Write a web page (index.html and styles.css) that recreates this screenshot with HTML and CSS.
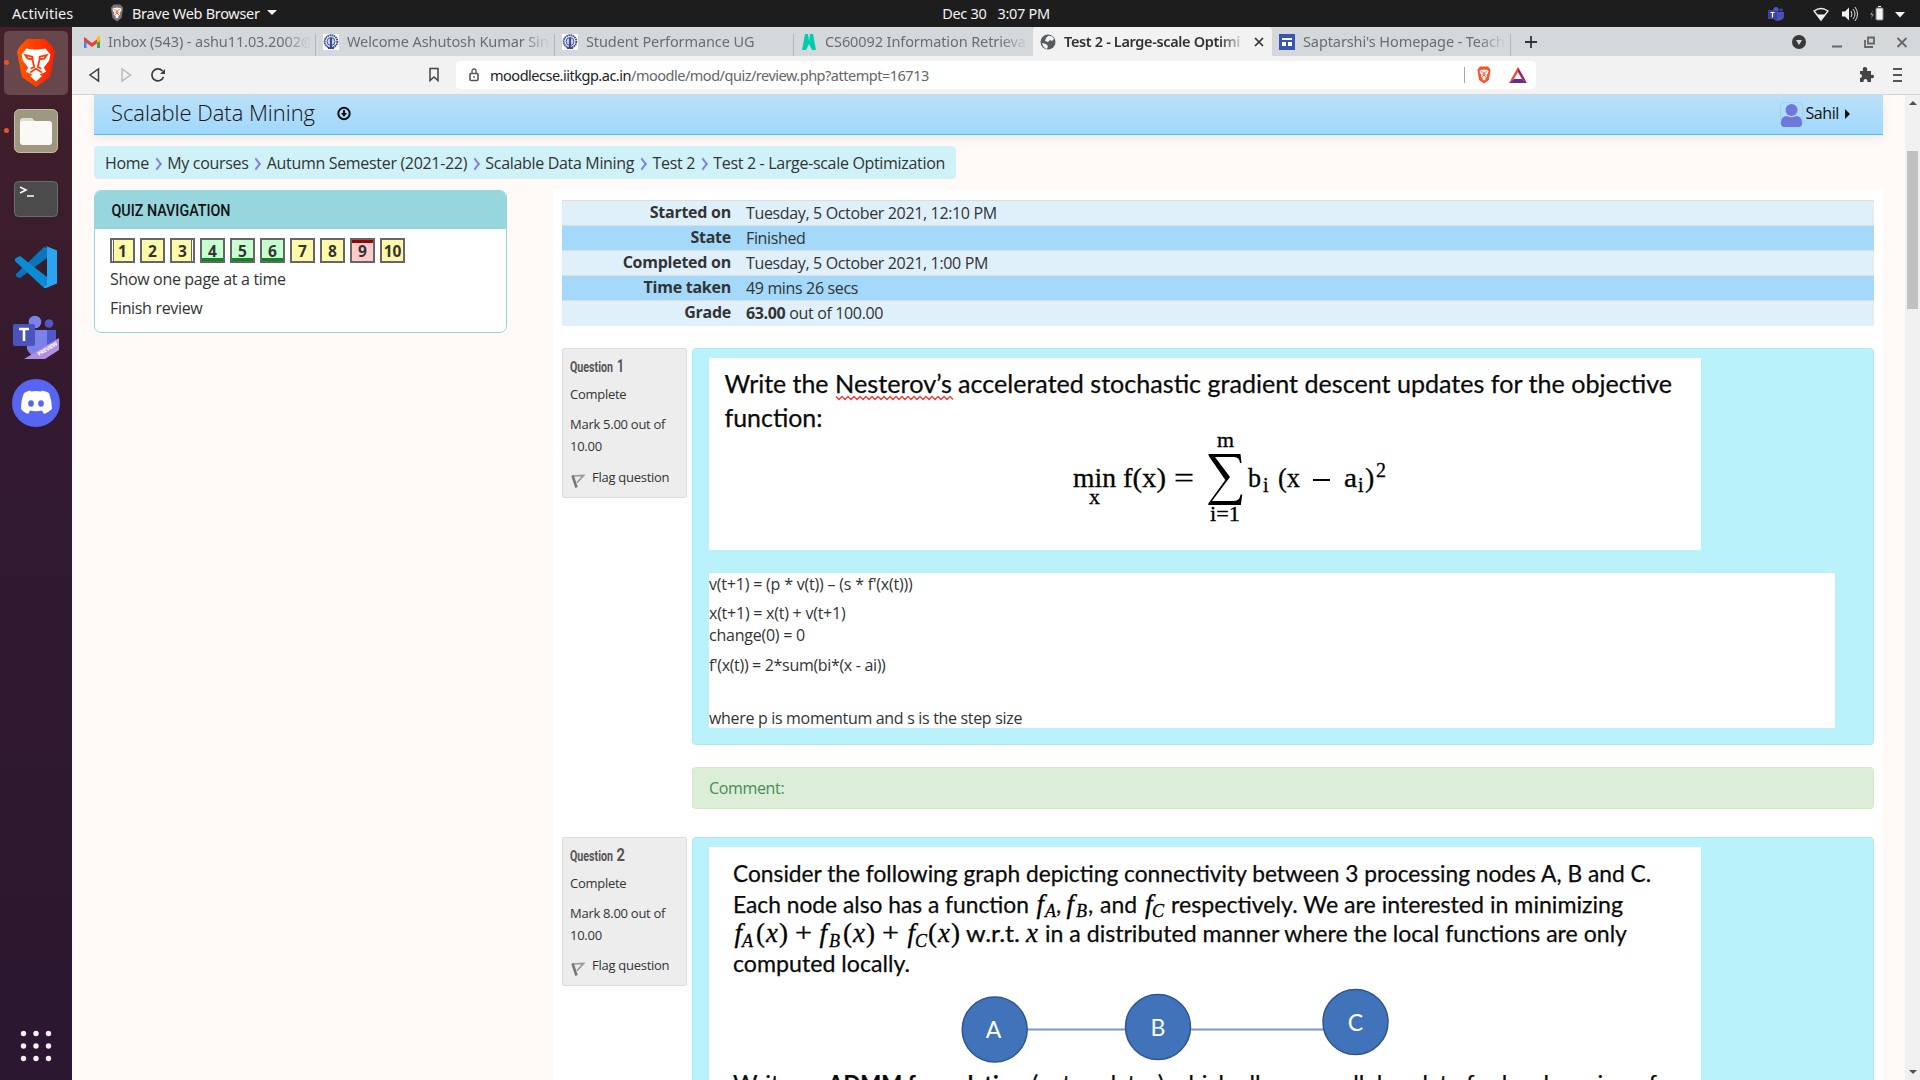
FILE: index.html
```html
<!DOCTYPE html>
<html lang="en">
<head>
<meta charset="utf-8">
<title>Test 2 - Large-scale Optimization</title>
<link rel="stylesheet" href="styles.css">
</head>
<body>
<svg class="defs" width="0" height="0">
  <defs>
    <linearGradient id="brave"><stop offset="0" stop-color="#ff5a00"/><stop offset="1" stop-color="#ff1f00"/></linearGradient>
    <g id="lion-face">
      <path d="M9 14l4-3 4 1 3-2 3 2 4-1 4 3-1 5-4 5 2 4-8 5-8-5 2-4-4-5z" fill="#fff"/>
      <path d="M12 16l5 1 2 1v6l-3-2M28 16l-5 1-2 1v6l3-2M14 29l6-4 6 4M20 24v2" stroke="#ff4210" stroke-width="1.8" fill="none"/>
      <path d="M20 29.500l-4.500 4 4.500 4 4.500-4z" fill="#fff"/>
    </g>
    <g id="lion-large">
      <path d="M8 17l4-5 5 1h6l5-1 4 5-1 5-4.500 6 2 3.500-8.500 3.500-8.500-3.500 2-3.500L9 22z" fill="#fff"/>
      <path d="M11 17.500l6 1.500v2l-4-.5zM29 17.500l-6 1.500v2l4-.5zM17 21l1.500 6.500-3 1.500M23 21l-1.500 6.500 3 1.500M15 32l5-3 5 3" stroke="#ff3c08" stroke-width="1.500" fill="none"/>
      <path d="M20 32l-5 3 5 4.500 5-4.500z" fill="#fff"/>
    </g>
    <g id="iit">
      <rect width="16" height="16" fill="#fff"/>
      <circle cx="8" cy="7.500" r="6.300" fill="none" stroke="#3c4c8f" stroke-width="1.900" stroke-dasharray="1.600 .5"/>
      <circle cx="8" cy="7.500" r="4" fill="#c9d0ea" stroke="#3c4c8f"/>
      <path d="M7 4h2v9h2v2H5v-2h2z" fill="#3c4c8f"/>
    </g>
    <g id="flag">
      <path d="M1.500 3l11-.5-6.500 7" fill="none" stroke="#999" stroke-width="1.700"/>
      <path d="M1.500 2.500l4 12" stroke="#777" stroke-width="2.600"/>
    </g>
  </defs>
</svg>
<div class="desktop">
  <header class="topbar">
    <span class="activities">Activities</span>
    <span class="app-menu">
      <svg width="16" height="18" viewBox="4 2 32 44"><path d="M12 3h16l7 8-4 25-11 9L9 36 5 11z" fill="#777"/><use href="#lion-face"/></svg>
      <span class="app-name">Brave Web Browser</span><i class="tri"></i>
    </span>
    <span class="clock"><span>Dec 30</span><span>3:07 PM</span></span>
    <svg class="tray" width="150" height="26" viewBox="1765 0 150 26">
      <circle cx="1776" cy="8.500" r="2.600" fill="#5059c9"/><circle cx="1781" cy="9" r="1.800" fill="#3940a0"/><path d="M1773 11h11v5q-1 3-3 3l-2 1q-4 0-6-3z" fill="#4a50b8"/><rect x="1768" y="9" width="9" height="9" fill="#3b42a8"/><path d="M1770.500 11.500h4M1772.500 11.500v5" stroke="#fff" stroke-width="1.200"/>
      <path d="M1814 10q7-5 14 0l-7 9z" fill="none" stroke="#f2f2f2" stroke-width="1.400"/><path d="M1816.500 13.500h9l-4.500 6z" fill="#f2f2f2"/>
      <path d="M1842 10.500h3l4-4v13l-4-4h-3z" fill="#f2f2f2"/><path d="M1851 10q2 3 0 6M1853 8q4 5 0 10M1855 6q5 7 0 14" stroke="#ddd" fill="none"/>
      <path d="M1873 9l-3 5h2l-1 4 3-5h-2z" fill="#888"/><rect x="1876" y="7" width="7" height="12" rx="1" fill="#f2f2f2" stroke="#888"/><path d="M1878 5.500h3" stroke="#fff"/>
      <path d="M1895 11h10l-5 5.500z" fill="#f2f2f2"/>
    </svg>
  </header>
  <div class="workspace">
    <nav class="dock">
      <div class="tile brave-tile running"><svg width="64" height="64" viewBox="0 0 64 64"><path d="M23 8h18l7 7 3 6-5 25-14 10-14-10L13 21l3-6z" fill="url(#brave)"/><g transform="translate(8 3) scale(1.200)"><use href="#lion-large"/></g></svg></div>
      <div class="files running"><svg width="44" height="44" viewBox="0 0 44 44"><rect x=".5" y=".5" width="43" height="43" rx="5" fill="#9f9780" stroke="#c3bda8"/><path d="M6 12q0-3 3-3h9l3 3h15v10H6z" fill="#dedbd0"/><rect x="6" y="12" width="32" height="24" rx="3" fill="#faf9f8"/></svg></div>
      <svg class="term" width="44" height="36" viewBox="0 0 44 36"><rect x=".5" y=".5" width="43" height="35" rx="4" fill="#4b4b4b" stroke="#6c6c6c"/><path d="M6 6l6 3-6 3M13 15h7" stroke="#fff" stroke-width="1.600" fill="none"/></svg>
      <svg class="code" width="42" height="42" viewBox="0 0 42 42"><path d="M1 28l28-27 3 1v10L5 32q-2 0-4-2z" fill="#0b74ba"/><path d="M5 10L32 31v10l-3 1L0 15q-1-2 1-3z" fill="#0c8bd3"/><path d="M31 0l11 4.500v33L31 42q-2 0-2-1l3-2V2z" fill="#2aa5f3"/></svg>
      <svg class="teams" width="46" height="44" viewBox="0 0 46 44"><circle cx="22" cy="7" r="6.300" fill="#7b83eb"/><circle cx="36" cy="8.500" r="4.300" fill="#5059c9"/><path d="M33 15h10v17q-3 7-10 7z" fill="#5059c9"/><path d="M14 15h20v18q-2 9-10 9-7-1-10-8z" fill="#7b83eb"/><rect y="9" width="22" height="22" rx="2" fill="#4b53bc"/><path d="M6 14h10M11 14v12" stroke="#fff" stroke-width="2.600"/><path d="M46 23v12L32 44H11z" fill="#b08ee2"/><text x="0" y="0" transform="translate(26 41) rotate(-31)" class="preview" textLength="22">PREVIEW</text></svg>
      <svg class="discord" width="48" height="48" viewBox="0 0 48 48"><circle cx="24" cy="24" r="24" fill="#5865f2"/><path d="M19 12.500q5-1 10 0l1-1q4 .5 7 2.500 3 8 3 16-3 3-8 5l-2-3.500q-6 1.500-12 0L16 35q-5-2-7-5 0-9 3-16 3-2 6-2.500z" fill="#fff"/><ellipse cx="19" cy="24.500" rx="2.800" ry="3.200" fill="#5865f2"/><ellipse cx="29" cy="24.500" rx="2.800" ry="3.200" fill="#5865f2"/></svg>
      <svg class="apps" width="32" height="32" viewBox="0 0 32 32" fill="#f2f2f2"><circle cx="3.500" cy="3.500" r="2.700"/><circle cx="16" cy="3.500" r="2.700"/><circle cx="28.500" cy="3.500" r="2.700"/><circle cx="3.500" cy="16" r="2.700"/><circle cx="16" cy="16" r="2.700"/><circle cx="28.500" cy="16" r="2.700"/><circle cx="3.500" cy="28.500" r="2.700"/><circle cx="16" cy="28.500" r="2.700"/><circle cx="28.500" cy="28.500" r="2.700"/></svg>
    </nav>
    <main class="browser">
      <div class="tabs">
        <div class="tab"><svg width="16" height="16" viewBox="0 0 16 16"><path d="M1 14V4" stroke="#4285f4" stroke-width="3"/><path d="M14.500 14V4" stroke="#34a853" stroke-width="3"/><path d="M0 3l8 6 8-6v4l-8 6-8-6z" fill="#ea4335"/><path d="M13 3l3-1v5l-3 2z" fill="#fbbc04"/></svg><span class="label">Inbox (543) - ashu11.03.2002@</span></div>
        <div class="tab"><svg width="16" height="16"><use href="#iit"/></svg><span class="label">Welcome Ashutosh Kumar Sin</span></div>
        <div class="tab"><svg width="16" height="16"><use href="#iit"/></svg><span class="label">Student Performance UG</span></div>
        <div class="tab no-sep"><svg width="16" height="16" viewBox="0 0 16 16"><path d="M4 0h3l1 7 1-7h3l3 16h-4l-3-6-3 6H1z" fill="#00cdb0"/></svg><span class="label">CS60092 Information Retrieva</span></div>
        <div class="tab active"><svg width="16" height="16" viewBox="0 0 16 16"><circle cx="8" cy="8" r="7.500" fill="#565b60"/><path d="M8 2q4-1 6 3l-2 2-2-1-2 2-3-1 1-3zM2 9l4 1 2 2-1 3q-4-1-5-6z" fill="#f1f1f1"/></svg><span class="label">Test 2 - Large-scale Optimi</span><svg class="close" width="10" height="10"><path d="M1 1l8 8M9 1l-8 8" stroke="#333" stroke-width="1.700"/></svg></div>
        <div class="tab"><svg width="16" height="16" viewBox="0 0 16 16"><rect width="16" height="16" fill="#3556b5"/><path d="M3 4h10v2H3zM3 8h4v4H3zM9 8h4v4H9z" fill="#fff"/></svg><span class="label">Saptarshi's Homepage - Teach</span></div>
        <svg class="plus" width="12" height="12"><path d="M6 0v12M0 6h12" stroke="#333" stroke-width="1.800"/></svg>
        <svg class="winctl" width="120" height="18" viewBox="0 0 120 18"><circle cx="9" cy="9" r="7" fill="#383838"/><path d="M6 7h6l-3 5z" fill="#d5d9dc"/><path d="M42 13.500h10" stroke="#666" stroke-width="2"/><path d="M78 4.500h6v6h-6zM75 7v7h8" stroke="#666" stroke-width="1.800" fill="none"/><path d="M107.500 5l9 9M116.500 5l-9 9" stroke="#666" stroke-width="1.800"/></svg>
      </div>
      <div class="toolbar">
        <svg class="navicons" width="80" height="18" viewBox="0 0 80 18"><path d="M10.500 3v12L2 9z" fill="none" stroke="#3c3c3c" stroke-width="1.500"/><path d="M34 3v12l8.500-6z" fill="none" stroke="#bbb" stroke-width="1.500"/><path d="M74.500 5a6 6 0 1 0 1 6" fill="none" stroke="#3c3c3c" stroke-width="1.700"/><path d="M77 3v5h-5z" fill="#3c3c3c"/></svg>
        <svg class="bookmark" width="12" height="16"><path d="M2 1.500h8v12l-4-3.500-4 3.500z" fill="none" stroke="#444" stroke-width="1.500"/></svg>
        <div class="urlbar">
          <svg width="12" height="14"><rect x="2" y="5.500" width="8" height="7" rx="1" fill="none" stroke="#555" stroke-width="1.600"/><path d="M4 5V3a2 2 0 0 1 4 0v2M6 8v2" stroke="#555" stroke-width="1.300" fill="none"/></svg>
          <span class="url"><b>moodlecse.iitkgp.ac.in</b>/moodle/mod/quiz/review.php?attempt=16713</span>
          <i class="urlsep"></i>
          <svg width="16" height="18" viewBox="4 2 32 44"><path d="M10 3h20l6 8-4 25-12 9L8 36 4 11z" fill="#f9542b"/><use href="#lion-face"/></svg>
          <svg class="bat" width="18" height="16"><path d="M9 0v5l-4 7-5 4z" fill="#ff4724"/><path d="M9 0l9 16-5-4-4-7z" fill="#9e1f63"/><path d="M0 16l5-4h8l5 4z" fill="#662d91"/></svg>
        </div>
        <svg class="ext" width="48" height="16" viewBox="0 0 48 16"><path d="M2 4h3q-1-4 2-4t2 4h4v4q3-1 3 1.500T13 11v4H9.500q0-3-2-3t-2 3H2v-4q2 0 2-2T2 7z" fill="#444"/><path d="M35 2h9M35 8h9M35 14h9" stroke="#555" stroke-width="1.800"/></svg>
      </div>
      <div class="viewport">
        <div class="page">
          <div class="banner">
            <svg class="site" width="260" height="40"><text x="17" y="26" textLength="204" lengthAdjust="spacingAndGlyphs">Scalable Data Mining</text><circle cx="250" cy="18.500" r="5.700" fill="none" stroke="#111" stroke-width="2"/><path d="M249 15h2v3h2l-3 4-3-4h2z" fill="#111"/></svg>
            <div class="user"><svg width="24" height="26" viewBox="0 0 24 26"><rect x=".5" y=".5" width="22" height="24" rx="4" fill="none" stroke="#9bd4fb"/><circle cx="11.500" cy="8" r="6" fill="#6e78dc"/><path d="M1 21q0-7 6-7 4.500 2.500 9 0 6 0 6 7 0 4-3 4H4q-3 0-3-4z" fill="#6e78dc"/></svg><span class="uname">Sahil</span><i class="caret"></i></div>
          </div>
          <div class="crumbs"><span>Home</span><i></i><span>My courses</span><i></i><span>Autumn Semester (2021-22)</span><i></i><span>Scalable Data Mining</span><i></i><span>Test 2</span><i></i><span>Test 2 - Large-scale Optimization</span></div>
          <div class="columns">
            <aside class="quiznav">
              <svg class="qhead" width="411" height="38"><text x="16.500" y="25" textLength="119" lengthAdjust="spacingAndGlyphs">QUIZ NAVIGATION</text></svg>
              <div class="qbody">
                <div class="qbtns"><b class="page-start">1</b><b>2</b><b class="page-end">3</b><b class="ok">4</b><b class="ok">5</b><b class="ok">6</b><b>7</b><b>8</b><b class="bad">9</b><b>10</b></div>
                <a>Show one page at a time</a>
                <a>Finish review</a>
              </div>
            </aside>
            <section class="content">
              <table class="summary">
                <tr><th>Started on</th><td>Tuesday, 5 October 2021, 12:10 PM</td></tr>
                <tr><th>State</th><td>Finished</td></tr>
                <tr><th>Completed on</th><td>Tuesday, 5 October 2021, 1:00 PM</td></tr>
                <tr><th>Time taken</th><td>49 mins 26 secs</td></tr>
                <tr><th>Grade</th><td><b>63.00</b> out of 100.00</td></tr>
              </table>
              <article class="question">
                <div class="info">
                  <svg class="qno" width="100" height="24"><text x="0" y="18" textLength="43" lengthAdjust="spacingAndGlyphs">Question</text><text class="num" x="47" y="18" textLength="7" lengthAdjust="spacingAndGlyphs">1</text></svg>
                  <p>Complete</p><p class="mark">Mark 5.00 out of 10.00</p>
                  <p class="flagline"><svg width="14" height="16"><use href="#flag"/></svg>Flag question</p>
                </div>
                <div class="qmain">
                  <div class="formulation">
                    <svg class="figure" width="992" height="192" viewBox="709 358 992 192">
                      <g class="sans q1">
                        <text x="724.500" y="392.500" textLength="104" lengthAdjust="spacingAndGlyphs">Write the</text>
                        <text x="835" y="392.500" textLength="117" lengthAdjust="spacingAndGlyphs">Nesterov’s</text>
                        <text x="958" y="392.500" textLength="714" lengthAdjust="spacingAndGlyphs">accelerated stochastic gradient descent updates for the objective</text>
                        <text x="724.500" y="427" textLength="98" lengthAdjust="spacingAndGlyphs">function:</text>
                      </g>
                      <path d="M836 396.500l3 3 3-3 3 3 3-3 3 3 3-3 3 3 3-3 3 3 3-3 3 3 3-3 3 3 3-3 3 3 3-3 3 3 3-3 3 3 3-3 3 3 3-3 3 3 3-3 3 3 3-3 3 3 3-3 3 3 3-3 3 3 3-3 3 3 3-3 3 3 3-3 3 3 3-3 3 3" fill="none" stroke="#f03a32" stroke-width="1.300"/>
                      <g class="math">
                        <text x="1073" y="487" textLength="43" lengthAdjust="spacingAndGlyphs">min</text>
                        <text class="sub" x="1089" y="504" textLength="11" lengthAdjust="spacingAndGlyphs">x</text>
                        <text x="1123" y="487" textLength="43" lengthAdjust="spacingAndGlyphs">f(x)</text>
                        <text x="1174" y="487" textLength="20" lengthAdjust="spacingAndGlyphs">=</text>
                        <text class="sub" x="1217" y="447" textLength="17" lengthAdjust="spacingAndGlyphs">m</text>
                        <path d="M1208.500 454h32l1 9h-1.500q-.5-6-6-6h-19l15 20-18 24h22q6 0 6.500-6.500h1.800l-1.500 10.500h-32.500v-1.500l17-23.500-16.500-24z"/>
                        <text class="sub" x="1210" y="521" textLength="30" lengthAdjust="spacingAndGlyphs">i=1</text>
                        <text x="1248" y="487" textLength="13" lengthAdjust="spacingAndGlyphs">b</text><text class="sub" x="1263" y="492">i</text>
                        <text x="1278" y="487" textLength="22" lengthAdjust="spacingAndGlyphs">(x</text>
                        <path d="M1313 479h17v2h-17z"/>
                        <text x="1344" y="487" textLength="13" lengthAdjust="spacingAndGlyphs">a</text><text class="sub" x="1358" y="492">i</text><text x="1365" y="487">)</text><text class="sub" x="1376" y="477">2</text>
                      </g>
                    </svg>
                    <div class="answer"><p>v(t+1) = (p * v(t)) – (s * f'(x(t)))</p><p class="pair">x(t+1) = x(t) + v(t+1)<br>change(0) = 0</p><p>f'(x(t)) = 2*sum(bi*(x - ai))</p><p class="last"><br>where p is momentum and s is the step size</p></div>
                  </div>
                  <div class="comment">Comment:</div>
                </div>
              </article>
              <article class="question">
                <div class="info">
                  <svg class="qno" width="100" height="24"><text x="0" y="18" textLength="43" lengthAdjust="spacingAndGlyphs">Question</text><text class="num" x="46.500" y="18" textLength="8.500" lengthAdjust="spacingAndGlyphs">2</text></svg>
                  <p>Complete</p><p class="mark">Mark 8.00 out of 10.00</p>
                  <p class="flagline"><svg width="14" height="16"><use href="#flag"/></svg>Flag question</p>
                </div>
                <div class="qmain">
                  <div class="formulation">
                    <svg class="figure" width="992" height="260" viewBox="709 847 992 260">
                      <g class="sans q2">
                        <text x="733" y="882" textLength="918" lengthAdjust="spacingAndGlyphs">Consider the following graph depicting connectivity between 3 processing nodes A, B and C.</text>
                        <text x="733" y="912.500" textLength="296" lengthAdjust="spacingAndGlyphs">Each node also has a function</text>
                        <text x="1056" y="912.500">,</text><text x="1088" y="912.500">,</text>
                        <text x="1100" y="912.500" textLength="37" lengthAdjust="spacingAndGlyphs">and</text>
                        <text x="1171" y="912.500" textLength="452" lengthAdjust="spacingAndGlyphs">respectively. We are interested in minimizing</text>
                        <text x="966" y="942" textLength="54" lengthAdjust="spacingAndGlyphs">w.r.t.</text>
                        <text x="1045" y="942" textLength="582" lengthAdjust="spacingAndGlyphs">in a distributed manner where the local functions are only</text>
                        <text x="733" y="971.500" textLength="177" lengthAdjust="spacingAndGlyphs">computed locally.</text>
                        <text x="733" y="1092" textLength="90" lengthAdjust="spacingAndGlyphs">Write an</text>
                        <text x="828" y="1092" textLength="196" lengthAdjust="spacingAndGlyphs" font-weight="bold">ADMM formulation</text>
                        <text x="1032" y="1092" textLength="132" lengthAdjust="spacingAndGlyphs">(get updates)</text>
                        <text x="1170" y="1092" textLength="487" lengthAdjust="spacingAndGlyphs">which allows parallel update for local version of</text>
                      </g>
                      <g class="ital">
                        <text x="1036.500" y="912.500">f</text><text class="isub" x="1045" y="917">A</text>
                        <text x="1066.500" y="912.500">f</text><text class="isub" x="1076" y="917">B</text>
                        <text x="1145" y="912.500">f</text><text class="isub" x="1152" y="917">C</text>
                        <text x="734.500" y="942">f</text><text class="isub" x="742" y="946.500">A</text><text x="756" y="942" textLength="32"><tspan class="up">(</tspan>x<tspan class="up">)</tspan></text><text class="up" x="795" y="942" textLength="17" lengthAdjust="spacingAndGlyphs">+</text>
                        <text x="819.500" y="942">f</text><text class="isub" x="829" y="946.500">B</text><text x="843" y="942" textLength="32"><tspan class="up">(</tspan>x<tspan class="up">)</tspan></text><text class="up" x="882" y="942" textLength="17" lengthAdjust="spacingAndGlyphs">+</text>
                        <text x="907.500" y="942">f</text><text class="isub" x="915" y="946.500">C</text><text x="928" y="942" textLength="32"><tspan class="up">(</tspan>x<tspan class="up">)</tspan></text>
                        <text x="1026" y="942" textLength="12" lengthAdjust="spacingAndGlyphs">x</text>
                      </g>
                      <path d="M1025 1029.500h100M1190 1029.500h135" stroke="#7895cc" stroke-width="2"/>
                      <g class="nodes"><circle cx="994.700" cy="1029.500" r="32.500"/><circle cx="1158" cy="1027" r="32.500"/><circle cx="1355.500" cy="1022" r="32.500"/></g>
                      <g class="node-labels"><text x="993.500" y="1038">A</text><text x="1158" y="1036">B</text><text x="1355.500" y="1031">C</text></g>
                    </svg>
                  </div>
                </div>
              </article>
            </section>
          </div>
        </div>
        <div class="scrollbar"><i class="up-arrow"></i><i class="thumb"></i><i class="down-arrow"></i></div>
      </div>
    </main>
  </div>
</div>
</body>
</html>
```
FILE: styles.css
```css
* { box-sizing: border-box; }
body { margin: 0; font-family: "Open Sans", sans-serif; color: #333; }
.defs { display: block; height: 0; }
.desktop { width: 1920px; height: 1080px; overflow: hidden; display: flex; flex-direction: column; }
svg { display: block; flex: none; }

/* system bar */
.topbar { height: 27px; flex: none; background: #1d1d1d; color: #f2f2f2; display: grid; grid-template-columns: 98px 1fr auto 1fr; align-items: center; font: 14.5px "Noto Sans", sans-serif; letter-spacing: -0.3px; }
.topbar > span { margin-top: -2px; }
.activities { padding-left: 12px; letter-spacing: 0.1px; }
.app-menu { display: flex; align-items: center; gap: 6px; padding-left: 11px; }
.app-name { padding-left: 1px; }
.tri { border: 5px solid transparent; border-top-color: #f2f2f2; border-bottom: 0; margin-left: 1px; }
.clock { display: flex; gap: 11px; margin-left: -26px; }
.tray { justify-self: end; margin-right: 5px; }

/* dock */
.workspace { flex: 1; display: flex; min-height: 0; }
.dock { width: 72px; flex: none; background: linear-gradient(#44202a, #32192f 38%, #2b1730); display: flex; flex-direction: column; align-items: center; }
.tile { width: 64px; height: 64px; margin-top: 4px; border-radius: 5px; background: #67464c; }
.files { margin-top: 14px; }
.running { position: relative; }
.running::before { content: ""; position: absolute; left: 0; top: 50%; width: 5px; height: 5px; margin-top: -3px; border-radius: 50%; background: #e95420; }
.files.running::before { left: -10px; }
.term { margin-top: 28px; }
.code { margin-top: 29px; }
.teams { margin-top: 27px; }
.discord { margin-top: 20px; }
.apps { margin-top: auto; margin-bottom: 18px; }
.preview { font: bold 5.5px "Open Sans", sans-serif; fill: #fff; }

/* browser chrome */
.browser { flex: 1; min-width: 0; display: flex; flex-direction: column; }
.tabs { height: 29px; flex: none; background: #d4d8db; display: flex; align-items: center; padding-left: 5px; }
.tab { width: 239px; height: 29px; flex: none; display: flex; align-items: center; gap: 8px; padding: 0 5px 0 7px; color: #6b6d6f; font: 14.5px "Noto Sans", sans-serif; letter-spacing: -0.1px; background: linear-gradient(#b3b6b9, #b3b6b9) right bottom / 1px 22px no-repeat; }
.tab.no-sep { background: none; }
.label { flex: 1; margin-top: -1px; overflow: hidden; white-space: nowrap; -webkit-mask-image: linear-gradient(90deg, #000 calc(100% - 28px), transparent); mask-image: linear-gradient(90deg, #000 calc(100% - 28px), transparent); }
.tab.active { background: #f2f2f2; border-radius: 4px 4px 0 0; color: #333; font-weight: 600; letter-spacing: -0.35px; }
.close { margin-right: 3px; }
.plus { margin-left: 14px; }
.winctl { margin-left: auto; margin-right: 10px; }
.toolbar { height: 39px; flex: none; background: #f2f2f2; border-bottom: 1px solid #d2d4d6; display: flex; align-items: center; padding-left: 16px; }
.bookmark { margin-left: 260px; }
.urlbar { margin-left: 16px; width: 1080px; height: 28px; background: #fff; border-radius: 4px; display: flex; align-items: center; padding: 0 9px 0 12px; font: 14.5px "Noto Sans", sans-serif; color: #666; }
.url { padding-left: 10px; flex: 1; letter-spacing: -0.49px; margin-top: -1px; }
.url b { font-weight: 400; color: #222; }
.urlsep { width: 1px; height: 16px; background: #aaa; margin-right: 11px; }
.bat { margin-left: 17px; }
.ext { margin-left: auto; margin-right: 14px; }

/* page */
.viewport { flex: 1; display: flex; min-height: 0; background: #fff9f8; }
.page { flex: 1; padding: 0 22px; display: flex; flex-direction: column; align-items: stretch; min-width: 0; overflow: hidden; }
.banner { height: 40px; flex: none; background: linear-gradient(#bbe0f9, #a0d8fb); border-bottom: 1px solid #4fbdf8; box-shadow: 0 3px 10px rgba(0,0,0,.08); display: flex; justify-content: space-between; align-items: center; }
.site text { font: 300 22px "Open Sans", sans-serif; fill: #111; }
.user { display: flex; align-items: center; padding-right: 33px; color: #111; font-size: 16px; letter-spacing: -0.4px; }
.uname { padding-left: 1px; margin-top: -3px; }
.caret { border: 5px solid transparent; border-left-color: #111; border-right: 0; margin: -2px 0 0 6px; }
.crumbs { align-self: flex-start; width: 862px; height: 33px; flex: none; margin-top: 11px; padding: 0 11px; background: #cff2f9; border-radius: 4px; display: flex; align-items: center; justify-content: space-between; font-size: 16px; letter-spacing: -0.32px; white-space: nowrap; }
.crumbs i { width: 8px; height: 8px; border: solid #8080e0; border-width: 2px 2px 0 0; transform: rotate(45deg) skew(8deg, 8deg); margin: 2px 3px 0 0; }
.columns { display: flex; margin-top: 11px; align-items: flex-start; flex: none; }
.quiznav { width: 413px; height: 143px; flex: none; border: 1px solid #98d6dd; border-radius: 7px; overflow: hidden; background: #fff; }
.qhead { background: #98d6dd; }
.qhead text { font: 500 16px Roboto, sans-serif; fill: #111; }
.qbody { padding: 9px 15px; font-size: 16px; }
.qbody a { display: block; line-height: 22px; margin-bottom: 7px; letter-spacing: -0.33px; }
.qbtns { display: flex; gap: 5px; margin: 0 0 5px; }
.qbtns b { width: 25px; height: 25px; border: 2px solid #666; background: #fffaa8; display: flex; align-items: center; justify-content: center; font-size: 15.5px; line-height: 20px; }
.qbtns .ok { background: linear-gradient(#c8ffd0 18px, #088a1e 18px); }
.qbtns .bad { background: linear-gradient(#990000 3px, #ffcaca 3px); }
.page-start { box-shadow: inset 1px 0 #fff, inset 2px 0 #666; }
.page-end { box-shadow: inset -1px 0 #fff, inset -2px 0 #666; }
.content { margin-left: 46px; flex: 1; height: 900px; background: #fff; padding: 10px 9px 0; }
.summary { width: 100%; border-collapse: collapse; font-size: 16px; line-height: 22px; }
.summary th, .summary td { height: 25px; padding: 0; border-top: 1px solid #ddd; letter-spacing: -0.35px; }
.summary td { padding-left: 15px; padding-bottom: 1px; padding-top: 1px; }
.summary th { width: 169px; text-align: right; padding-bottom: 2px; letter-spacing: -0.25px; }
.summary tr { background: #dff0fb; }
.summary tr:nth-child(even) { background: #a5d9fa; }
.question { display: flex; gap: 5px; margin-top: 22px; align-items: flex-start; }
.question + .question { margin-top: 28px; }
.info { width: 125px; height: 150px; flex: none; border: 1px solid #ddd; border-radius: 2px; background: #ededed; padding: 6px 7px; font-size: 13px; }
.question + .question .info { height: 149px; }
.qno { margin-top: -1px; }
.qno text { font: bold 14px Roboto, sans-serif; fill: #555; }
.qno .num { font-size: 19px; }
.info p { margin: 5px 0 7px; line-height: 22px; letter-spacing: -0.27px; }
.info .mark { margin-top: 8px; }
.info .flagline { display: flex; align-items: center; gap: 7px; margin-top: 9px; }
.question + .question .mark { margin-bottom: 8px; }
.question + .question .flagline { margin-top: 8px; }
.flagline svg { margin-top: 6px; margin-bottom: -2px; margin-left: 1px; }
.qmain { flex: 1; min-width: 0; }
.formulation { border: 1px solid #afe6ef; border-radius: 4px; background: #baf2fc; padding: 9px 16px 16px; }
.figure { background: #fff; }
.sans text { font-family: Lato, sans-serif; fill: #0a0a0a; stroke: #0a0a0a; stroke-width: .25px; }
.q1 text { font-size: 25px; }
.q2 text { font-size: 23px; }
.math text { font-family: "Liberation Serif", serif; font-size: 28px; stroke: #000; stroke-width: .3px; }
.math .sub { font-size: 20px; }
.ital text { font-family: "Liberation Serif", serif; font-style: italic; font-size: 27px; stroke: #000; stroke-width: .3px; }
.ital .isub { font-size: 18px; }
.ital .up { font-style: normal; }
.nodes { fill: #4173ba; stroke: #30558f; stroke-width: 1.500px; }
.node-labels { font: 23px Lato, sans-serif; fill: #fff; text-anchor: middle; }
.answer { width: 1126px; height: 155px; margin-top: 23px; background: #fff; font-size: 16px; line-height: 22px; letter-spacing: -0.32px; }
.answer p { margin: 0 0 8px; }
.answer p:first-child { margin-bottom: 7px; letter-spacing: -0.2px; }
.answer .last { margin-top: 9px; }
.answer .pair { letter-spacing: -0.24px; }
.comment { height: 42px; margin-top: 22px; padding: 9px 16px; border: 1px solid #d3e8c8; border-radius: 4px; background: #dceed8; color: #468c57; font-size: 16px; line-height: 22px; letter-spacing: -0.35px; }
.scrollbar { width: 15px; flex: none; background: #f0f0f0; display: flex; flex-direction: column; align-items: center; }
.up-arrow { border: 4px solid transparent; border-bottom-color: #505050; border-top: 0; margin-top: 6px; }
.thumb { width: 11px; height: 158px; margin-top: 46px; background: #c1c1c1; }
.down-arrow { border: 4px solid transparent; border-top-color: #505050; border-bottom: 0; margin-top: auto; margin-bottom: 6px; }
```
